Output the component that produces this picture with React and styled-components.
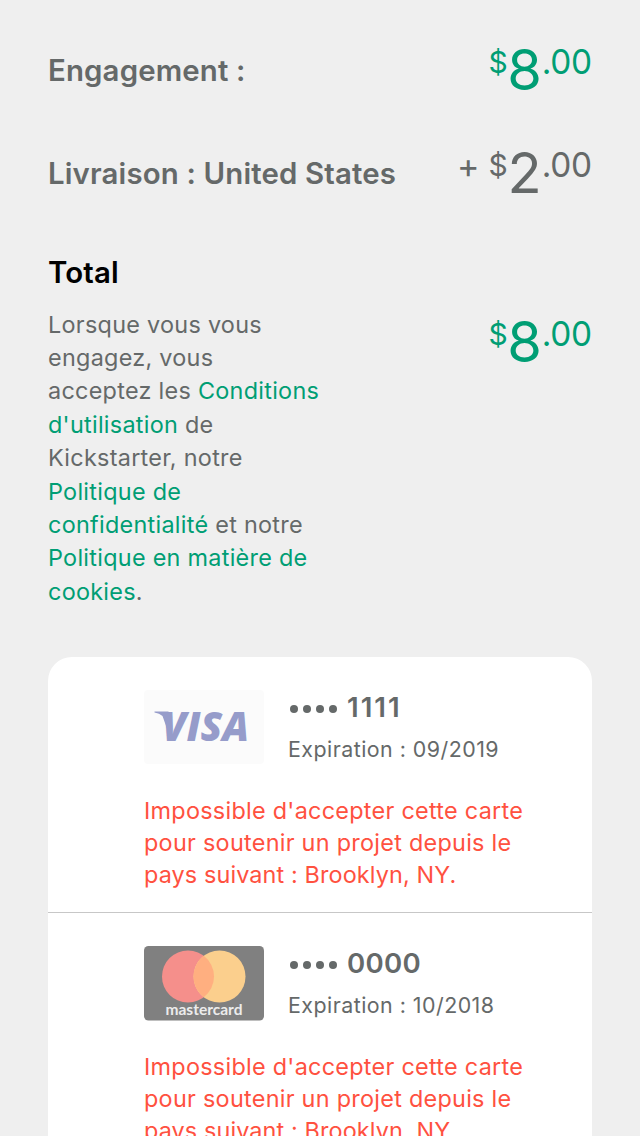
import React from "react";
import styled, { createGlobalStyle } from "styled-components";

const GlobalStyle = createGlobalStyle`
  * { box-sizing: border-box; }
  body { margin: 0; background: #efefef; }
`;

const Page = styled.main`
  width: 640px;
  height: 1136px;
  overflow: hidden;
  padding: 0 48px;
  background: #efefef;
  color: #656969;
  font-family: Inter, "Liberation Sans", sans-serif;
`;

const SummaryRow = styled.section`
  display: flex;
  justify-content: space-between;
  height: 103px;
`;

const RowTitle = styled.h2`
  margin: 0;
  padding-top: ${(p) => p.$top || 51}px;
  font-size: 29.4px;
  line-height: 40px;
  font-weight: 600;
  letter-spacing: 0.15px;
  color: ${(p) => p.$color || "inherit"};
  white-space: nowrap;
`;

const Amount = styled.div`
  display: flex;
  align-items: flex-start;
  padding-top: 39px;
  color: ${(p) => (p.$green ? "#009e74" : "#656969")};
  white-space: nowrap;
`;

const Plus = styled.span`
  font-size: 34px;
  line-height: 40px;
  margin: 4px 9px 0 0;
`;

const Currency = styled.span`
  font-size: 30px;
  line-height: 46px;
`;

const Units = styled.span`
  font-size: 56px;
  line-height: 62px;
  width: 34px;
  display: flex;
  justify-content: center;
`;

const Cents = styled.span`
  font-size: 33.4px;
  line-height: 47px;
  letter-spacing: -0.2px;
`;

const TotalSection = styled.section`
  height: 451px;
  padding-top: 1px;
`;

const TotalBody = styled.div`
  display: flex;
  justify-content: space-between;
  align-items: flex-start;
`;

const Terms = styled.p`
  margin: 14.6px 0 0;
  font-size: 23.4px;
  line-height: 33.4px;
  letter-spacing: 0.28px;
  white-space: nowrap;
`;

const Link = styled.span`
  color: #009e74;
`;

const TotalAmount = styled.div`
  margin-top: -21px;
`;

const CardList = styled.ul`
  margin: 0;
  padding: 0;
  list-style: none;
  background: #fff;
  border-radius: 24px 24px 0 0;
`;

const CardItem = styled.li`
  height: 256px;
  padding: 33px 0 0 96px;
  border-bottom: 1px solid #c7c7c7;
`;

const CardHead = styled.div`
  display: flex;
  gap: 24px;
  height: 75px;
`;

const Logo = styled.svg`
  display: block;
  flex: none;
  width: 120px;
  height: 75px;
`;

const CardNumber = styled.div`
  display: flex;
  align-items: center;
  height: 35px;
  font-size: 27.6px;
  line-height: 35px;
  font-weight: 600;
  letter-spacing: ${(p) => p.$track || 0}px;
`;

const Dots = styled.span`
  display: flex;
  gap: 5px;
  margin: 3px 10px 0 2px;
`;

const Dot = styled.i`
  width: 8px;
  height: 8px;
  border-radius: 50%;
  background: #656969;
`;

const Expiry = styled.div`
  margin-top: 9px;
  font-size: 21.4px;
  line-height: 31px;
  letter-spacing: 0.47px;
`;

const ErrorText = styled.p`
  margin: 30px 0 0;
  font-size: 23.4px;
  line-height: 32px;
  letter-spacing: 0.28px;
  color: #ff513f;
  white-space: nowrap;
`;

const LastLine = styled.span`
  letter-spacing: 0.12px;
`;

const Price = ({ green, plus, units }) => (
  <Amount $green={green}>
    {plus && <Plus>+</Plus>}
    <Currency>$</Currency>
    <Units>{units}</Units>
    <Cents>.00</Cents>
  </Amount>
);

const VisaLogo = () => (
  <Logo viewBox="0 0 120 75">
    <rect width="120" height="74" rx="4" fill="#fbfbfb" />
    <path d="M10.5 21.5H24Q26 21.5 26.4 24L28 35L23.5 40L18.5 26Q15.5 23.6 10.5 22.6Z" fill="#969cca" />
    <text
      x="18"
      y="51"
      textLength="87"
      lengthAdjust="spacingAndGlyphs"
      fontFamily="Open Sans, sans-serif"
      fontSize="41"
      fontWeight="800"
      fontStyle="italic"
      fill="#969cca"
    >
      VISA
    </text>
  </Logo>
);

const MastercardLogo = () => (
  <Logo viewBox="0 0 120 75">
    <rect width="120" height="74.5" rx="4.5" fill="#808080" />
    <circle cx="44" cy="30.5" r="26" fill="#f58f8b" />
    <circle cx="75.5" cy="30.5" r="26" fill="#fbcf8d" />
    <path d="M59.75 9.8A26 26 0 0 1 59.75 51.2A26 26 0 0 1 59.75 9.8Z" fill="#ffaf80" />
    <text
      x="21.5"
      y="69"
      textLength="77"
      lengthAdjust="spacingAndGlyphs"
      fontFamily="Lato, sans-serif"
      fontSize="14.4"
      fontWeight="700"
      fill="#ececec"
    >
      mastercard
    </text>
  </Logo>
);

const PaymentCard = ({ logo, digits, track, expiry }) => (
  <CardItem>
    <CardHead>
      {logo}
      <div>
        <CardNumber $track={track}>
          <Dots>
            <Dot /><Dot /><Dot /><Dot />
          </Dots>
          {digits}
        </CardNumber>
        <Expiry>Expiration : {expiry}</Expiry>
      </div>
    </CardHead>
    <ErrorText>
      Impossible d'accepter cette carte<br />
      pour soutenir un projet depuis le<br />
      <LastLine>pays suivant : Brooklyn, NY.</LastLine>
    </ErrorText>
  </CardItem>
);

export default function App() {
  return (
    <>
      <GlobalStyle />
      <Page>
        <SummaryRow>
          <RowTitle>Engagement :</RowTitle>
          <Price green units="8" />
        </SummaryRow>
        <SummaryRow>
          <RowTitle>Livraison : United States</RowTitle>
          <Price plus units="2" />
        </SummaryRow>
        <TotalSection>
          <RowTitle $top={46} $color="#000">Total</RowTitle>
          <TotalBody>
            <Terms>
              Lorsque vous vous<br />
              engagez, vous<br />
              acceptez les <Link>Conditions</Link><br />
              <Link>d'utilisation</Link> de<br />
              Kickstarter, notre<br />
              <Link>Politique de</Link><br />
              <Link>confidentialité</Link> et notre<br />
              <Link>Politique en matière de</Link><br />
              <Link>cookies</Link>.
            </Terms>
            <TotalAmount>
              <Price green units="8" />
            </TotalAmount>
          </TotalBody>
        </TotalSection>
        <CardList>
          <PaymentCard logo={<VisaLogo />} digits="1111" track={2} expiry="09/2019" />
          <PaymentCard logo={<MastercardLogo />} digits="0000" track={0.3} expiry="10/2018" />
        </CardList>
      </Page>
    </>
  );
}
